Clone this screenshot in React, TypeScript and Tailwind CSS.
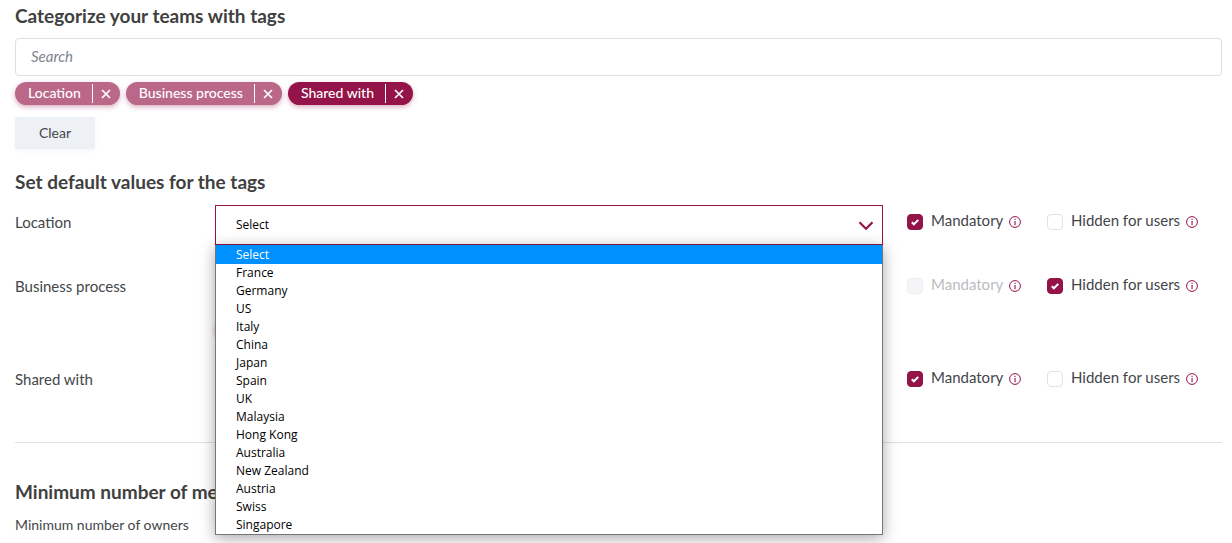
import { useState } from 'react';
import { clsx } from 'clsx';

const countries = [
  'Select',
  'France',
  'Germany',
  'US',
  'Italy',
  'China',
  'Japan',
  'Spain',
  'UK',
  'Malaysia',
  'Hong Kong',
  'Australia',
  'New Zealand',
  'Austria',
  'Swiss',
  'Singapore',
];

const tags = [
  { label: 'Location', active: false },
  { label: 'Business process', active: false },
  { label: 'Shared with', active: true },
];

const InfoIcon = () => (
  <svg width="12" height="12" viewBox="0 0 12 12" fill="none" className="mt-1 shrink-0" aria-hidden="true">
    <circle cx="6" cy="6" r="5.4" stroke="#941348" />
    <rect x="5.5" y="2.8" width="1.1" height="1.2" fill="#941348" />
    <rect x="5.5" y="5" width="1.1" height="4.2" fill="#941348" />
  </svg>
);

type TagProps = { label: string; active: boolean };

const Tag = ({ label, active }: TagProps) => (
  <li
    className={clsx(
      'flex h-[23px] items-center rounded-full pl-[13px] text-sm leading-[18px] font-medium text-white shadow-[0_2px_5px_rgba(148,19,72,0.35)]',
      active ? 'bg-[#941348]' : 'bg-[#ba6788]',
    )}
  >
    <span className="pr-[11px] pb-0.5">{label}</span>
    <button
      type="button"
      aria-label={`Remove ${label}`}
      className="flex h-[19px] w-7 items-center border-l border-white pl-2"
    >
      <svg width="10" height="10" viewBox="0 0 10 10" stroke="white" strokeWidth="1.7" aria-hidden="true">
        <path d="M1 1l8 8M9 1L1 9" />
      </svg>
    </button>
  </li>
);

type CheckProps = { id: string; label: string; defaultChecked?: boolean; disabled?: boolean };

const Check = ({ id, label, defaultChecked = false, disabled = false }: CheckProps) => {
  const [checked, setChecked] = useState(defaultChecked);

  return (
    <div className="flex h-[30px] items-center">
      <span className="relative mt-1 mr-2 block size-4 shrink-0">
        <input
          id={id}
          type="checkbox"
          checked={checked}
          disabled={disabled}
          onChange={(e) => setChecked(e.target.checked)}
          className="block size-4 appearance-none rounded-[4px] border border-[#dfe2e8] bg-white checked:border-[#941348] checked:bg-[#941348] disabled:border-[#eceef1] disabled:bg-[#f4f5f7]"
        />
        {checked && (
          <svg viewBox="0 0 16 16" className="pointer-events-none absolute inset-0" fill="none" aria-hidden="true">
            <path d="M4.8 8.2l2.1 2.1 4.4-4.4" stroke="white" strokeWidth="2" />
          </svg>
        )}
      </span>
      <label htmlFor={id} className={clsx('mr-1.5 whitespace-nowrap', disabled && 'text-[#babdc1]')}>
        {label}
      </label>
      <InfoIcon />
    </div>
  );
};

type SelectProps = { id: string; options: string[]; open?: boolean };

const SelectField = ({ id, options, open = false }: SelectProps) => {
  const [value, setValue] = useState(options[0]);

  return (
    <div className="relative font-['Open_Sans',sans-serif] text-xs text-black">
      <select
        id={id}
        value={value}
        onChange={(e) => setValue(e.target.value)}
        className={clsx(
          'block h-10 w-full appearance-none border bg-white px-5 outline-none',
          open ? 'border-[#941348]' : 'border-[#dcdfe6]',
        )}
      >
        {options.map((option) => (
          <option key={option}>{option}</option>
        ))}
      </select>
      <svg
        width="16"
        height="10"
        viewBox="0 0 16 10"
        fill="none"
        className="pointer-events-none absolute top-4 right-[9px]"
        aria-hidden="true"
      >
        <path d="M1.5 1.2L8 7.8l6.500-6.600" stroke="#941348" strokeWidth="2.2" />
      </svg>
      {open && (
        <ul
          role="listbox"
          aria-label="Location values"
          className="absolute inset-x-0 top-full z-10 border border-t-0 border-[#767676] bg-white shadow-[0_3px_14px_rgba(0,0,0,0.35)]"
        >
          {options.map((option) => (
            <li
              key={option}
              role="option"
              aria-selected={option === value}
              onClick={() => setValue(option)}
              className={clsx(
                'px-5 pl-[20px] leading-[18px] first:pt-px',
                option === value && 'bg-[#0090ff] text-white',
              )}
            >
              {option}
            </li>
          ))}
        </ul>
      )}
    </div>
  );
};

const rowClass = 'grid grid-cols-[200px_minmax(0,1fr)_339px] items-start';

export default function App() {
  return (
    <main className="bg-white pt-1 pr-[10px] pb-2 pl-[15px] font-['Lato',sans-serif] text-[15px] text-[#43464a]">
      <h2 className="text-[19px] leading-6 font-bold text-[#404040]">Categorize your teams with tags</h2>
      <input
        type="search"
        aria-label="Search tags"
        placeholder="Search"
        className="mt-[10px] block h-[38px] w-full rounded-[4px] border border-[#dcdfe6] px-[15px] pb-0.5 outline-none placeholder:text-[#7c8590] placeholder:italic"
      />
      <ul className="mt-1.5 flex gap-1.5">
        {tags.map((tag) => (
          <Tag key={tag.label} {...tag} />
        ))}
      </ul>
      <button
        type="button"
        className="mt-3 block h-8 w-20 rounded-[2px] bg-[#edf1f6] text-sm shadow-[0_2px_4px_rgba(237,241,246,0.6)]"
      >
        Clear
      </button>

      <h2 className="mt-[21px] text-[19px] leading-6 font-bold text-[#404040]">Set default values for the tags</h2>

      <div className="mt-[11px] border-b border-[#dcdfe6] pb-10">
        <div className={rowClass}>
          <label htmlFor="location" className="pt-1.5 leading-[22px]">Location</label>
          <SelectField id="location" options={countries} open />
          <div className="grid grid-cols-[140px_1fr] pl-6">
            <Check id="location-mandatory" label="Mandatory" defaultChecked />
            <Check id="location-hidden" label="Hidden for users" />
          </div>
        </div>

        <div className={clsx(rowClass, 'mt-6')}>
          <label htmlFor="process" className="pt-1.5 leading-[22px]">Business process</label>
          <div>
            <SelectField id="process" options={['Select']} />
            <span className="mt-2 block h-[23px] w-24 rounded-full bg-[#941348] shadow-[0_2px_5px_rgba(148,19,72,0.35)]" />
          </div>
          <div className="grid grid-cols-[140px_1fr] pl-6">
            <Check id="process-mandatory" label="Mandatory" disabled />
            <Check id="process-hidden" label="Hidden for users" defaultChecked />
          </div>
        </div>

        <div className={clsx(rowClass, 'mt-[22px]')}>
          <label htmlFor="shared" className="pt-1.5 leading-[22px]">Shared with</label>
          <SelectField id="shared" options={['Select']} />
          <div className="grid grid-cols-[140px_1fr] pl-6">
            <Check id="shared-mandatory" label="Mandatory" defaultChecked />
            <Check id="shared-hidden" label="Hidden for users" />
          </div>
        </div>
      </div>

      <h2 className="mt-[37px] text-[19px] leading-6 font-bold text-[#404040]">Minimum number of members</h2>
      <p className="mt-[11px] text-sm">Minimum number of owners</p>
    </main>
  );
}
